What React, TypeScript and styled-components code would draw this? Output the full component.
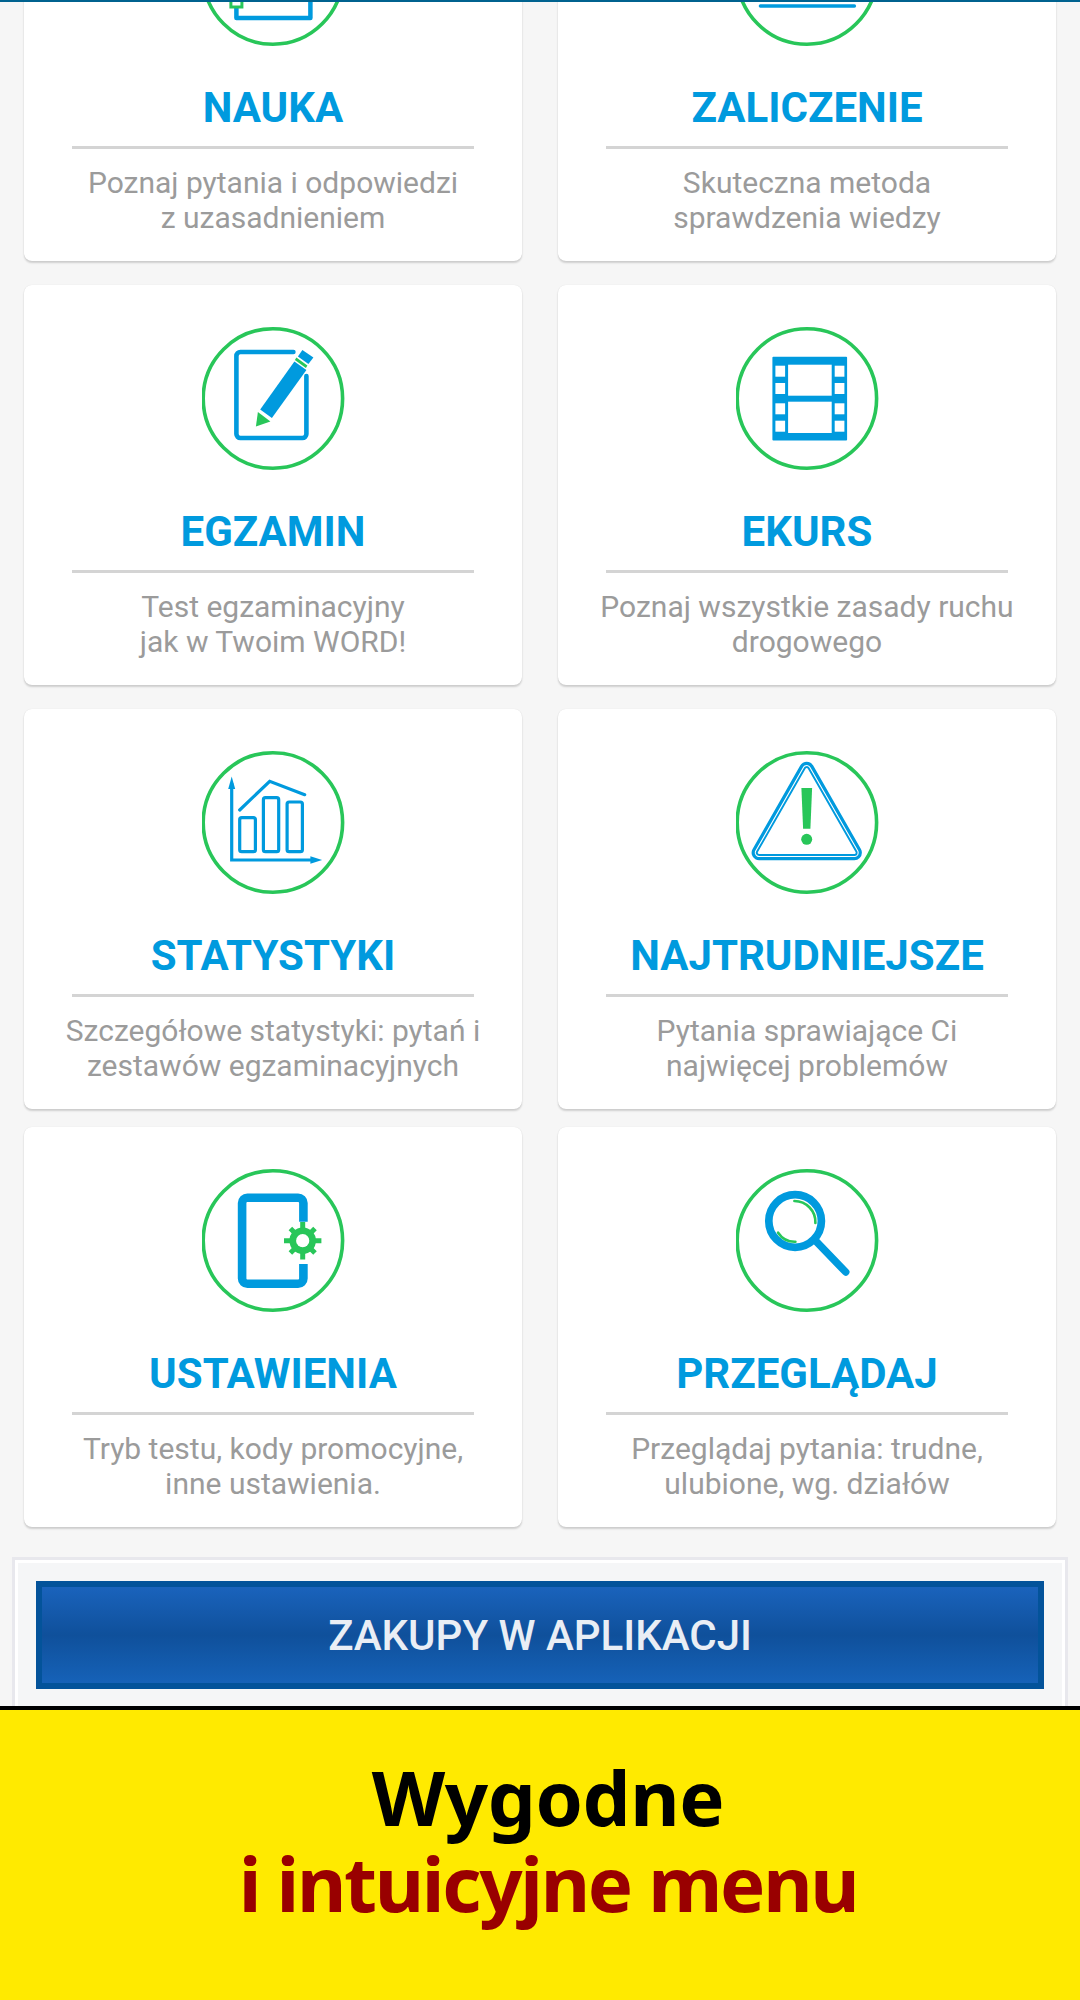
import React from 'react';
import styled, { createGlobalStyle } from 'styled-components';

const BLUE = '#009ade';
const GREEN = '#28c659';

const Global = createGlobalStyle`
  html, body { margin: 0; padding: 0; background: #f6f6f6; }
  * { box-sizing: border-box; }
`;

const Page = styled.div`
  width: 1080px;
  height: 2000px;
  display: flex;
  flex-direction: column;
  overflow: hidden;
  background: #f6f6f6;
  font-family: Roboto, "Liberation Sans", sans-serif;
`;
const TopLine = styled.div`
  flex: none;
  height: 2px;
  background: #00628f;
`;
const Viewport = styled.main`
  flex: 1;
  min-height: 0;
  overflow: hidden;
`;
const Scrolled = styled.div`
  margin-top: -141px;
`;
const Row = styled.section<{ $gap: number }>`
  display: grid;
  grid-template-columns: 498px 498px;
  column-gap: 36px;
  padding: 0 24px;
  margin-top: ${p => p.$gap}px;
`;
const Card = styled.article`
  height: 400px;
  padding-top: 42px;
  display: flex;
  flex-direction: column;
  align-items: center;
  background: #fff;
  border-radius: 8px;
  box-shadow: 0 0 1px rgba(0, 0, 0, 0.12), 0 2px 2px rgba(0, 0, 0, 0.16);
`;
const Icon = styled.svg`
  display: block;
  flex: none;
  width: 143px;
  height: 143px;
`;
const Title = styled.h2`
  margin: 38px 0 0;
  font-size: 42px;
  line-height: 48px;
  font-weight: 700;
  color: ${BLUE};
`;
const Rule = styled.hr`
  width: 402px;
  height: 3px;
  margin: 14px 0 0;
  border: 0;
  background: #d4d4d4;
`;
const Desc = styled.p`
  margin: 16px 0 0;
  width: 440px;
  text-align: center;
  font-size: 30px;
  line-height: 35px;
  color: #9b9b9b;
  white-space: pre-line;
`;
const Shop = styled.section`
  margin: 30px 12px 0;
  padding: 21px;
  border: 3px solid #e8e8ed;
  background: #f5f6f7;
  box-shadow: inset 0 0 0 3px #fff;
`;
const ShopButton = styled.button`
  display: block;
  width: 100%;
  height: 108px;
  padding: 0;
  border: 6px solid #03539a;
  background: linear-gradient(180deg, #1a63bc 0%, #0f509b 50%, #1662b8 100%);
  color: #e9eef5;
  font-family: Roboto, "Liberation Sans", sans-serif;
  font-size: 42px;
  font-weight: 500;
`;
const Banner = styled.footer`
  flex: none;
  height: 294px;
  padding: 44px 0 0 16px;
  border-top: 4px solid #000;
  background: #ffea00;
  text-align: center;
  font-family: "Noto Sans", "Open Sans", sans-serif;
  font-weight: 700;
  font-size: 76px;
  line-height: 86px;
`;
const BannerLine = styled.div<{ $color: string; $tight: number }>`
  color: ${p => p.$color};
  letter-spacing: ${p => p.$tight}px;
`;

const Ring = () => <circle cx="71.5" cy="71.5" r="69.7" fill="none" stroke={GREEN} strokeWidth="3.6" />;

const icons: Record<string, React.ReactNode> = {
  nauka: (
    <>
      <path d="M35 60V115H109V60" fill="none" stroke={BLUE} strokeWidth="4.5" strokeLinejoin="round" />
      <rect x="29.5" y="92" width="11" height="12" fill="#fff" stroke={GREEN} strokeWidth="3" />
    </>
  ),
  zaliczenie: <path d="M25 103H119" fill="none" stroke={BLUE} strokeWidth="3.4" strokeLinecap="round" />,
  egzamin: (
    <>
      <path d="M92 25H39a4 4 0 0 0-4 4V107a4 4 0 0 0 4 4H101a4 4 0 0 0 4-4V49" fill="none" stroke={BLUE} strokeWidth="4.6" strokeLinecap="round" />
      <path d="M101 23L112 30.5L107 37L96.5 29.5Z" fill={BLUE} />
      <path d="M95 30.5L106 38.5L104.5 41L93.5 33Z" fill={GREEN} />
      <path d="M93 34.5L105 43L70.5 91L58.8 82.5Z" fill={BLUE} />
      <path d="M56.5 85L69 94.5L54.5 99.5Z" fill={GREEN} />
    </>
  ),
  ekurs: (
    <>
      <rect x="37" y="29.7" width="74.7" height="83.7" rx="1" fill={BLUE} />
      {[38.7, 56, 76.3, 93.7].map(y => (
        <React.Fragment key={y}>
          <rect x="40" y={y} width="9.7" height="11" fill="#fff" />
          <rect x="99.3" y={y} width="9.7" height="11" fill="#fff" />
        </React.Fragment>
      ))}
      <rect x="52.7" y="37.7" width="43.6" height="31" fill="#fff" />
      <rect x="52.7" y="74.7" width="43.6" height="31.3" fill="#fff" />
    </>
  ),
  statystyki: (
    <>
      <path d="M30.3 32V109H113" fill="none" stroke={BLUE} strokeWidth="3.2" />
      <path d="M30.3 25.5L33.8 38H26.8Z" fill={BLUE} />
      <path d="M120.7 109L109 105.2V112.8Z" fill={BLUE} />
      <rect x="38.3" y="66.7" width="15.7" height="34" rx="2" fill="none" stroke={BLUE} strokeWidth="3.2" />
      <rect x="62" y="46.7" width="15.3" height="54" rx="2" fill="none" stroke={BLUE} strokeWidth="3.2" />
      <rect x="85.7" y="51" width="15.3" height="49.7" rx="2" fill="none" stroke={BLUE} strokeWidth="3.2" />
      <path d="M38.3 59L68.3 30.3L103.3 43.7" fill="none" stroke={BLUE} strokeWidth="3.2" strokeLinecap="round" />
    </>
  ),
  najtrudniejsze: (
    <>
      {[
        [15, BLUE],
        [8.6, '#fff'],
        [6.4, BLUE],
        [2.6, '#fff'],
      ].map(([w, c]) => (
        <path key={String(w)} d="M71.3 18.3L23.7 101.7H119Z" fill="#fff" stroke={String(c)} strokeWidth={Number(w)} strokeLinejoin="round" />
      ))}
      <path d="M66 37H76.7L75 77.7H67.7Z" fill={GREEN} />
      <circle cx="71.3" cy="88.3" r="5.5" fill={GREEN} />
    </>
  ),
  ustawienia: (
    <>
      <path d="M102 52.7V34a5.3 5.3 0 0 0-5.3-5.3H46a5.3 5.3 0 0 0-5.3 5.3V109.4a5.3 5.3 0 0 0 5.3 5.3H96.7a5.3 5.3 0 0 0 5.3-5.3V95" fill="none" stroke={BLUE} strokeWidth="8.6" />
      <circle cx="101.3" cy="71.7" r="10" fill="none" stroke={GREEN} strokeWidth="6.5" />
      <path d="M101.3 53V90.4M82.6 71.7H120M89 59.4L113.6 84M113.6 59.4L89 84" fill="none" stroke={GREEN} strokeWidth="5" />
      <circle cx="101.3" cy="71.7" r="6.6" fill="#fff" />
    </>
  ),
  przegladaj: (
    <>
      <circle cx="59.7" cy="52" r="26.3" fill="none" stroke={BLUE} strokeWidth="7.7" />
      <path d="M81 72.7L110.3 103" fill="none" stroke={BLUE} strokeWidth="7.5" strokeLinecap="round" />
      <path d="M59 32A21 21 0 0 1 80 54" fill="none" stroke={GREEN} strokeWidth="2.6" strokeLinecap="round" />
      <path d="M42.7 63.7A20 20 0 0 0 60 72.7" fill="none" stroke={GREEN} strokeWidth="2.6" strokeLinecap="round" />
    </>
  ),
};

const rows = [
  {
    gap: 0,
    cards: [
      { icon: 'nauka', title: 'NAUKA', desc: 'Poznaj pytania i odpowiedzi\nz uzasadnieniem' },
      { icon: 'zaliczenie', title: 'ZALICZENIE', desc: 'Skuteczna metoda\nsprawdzenia wiedzy' },
    ],
  },
  {
    gap: 24,
    cards: [
      { icon: 'egzamin', title: 'EGZAMIN', desc: 'Test egzaminacyjny\njak w Twoim WORD!' },
      { icon: 'ekurs', title: 'EKURS', desc: 'Poznaj wszystkie zasady ruchu\ndrogowego' },
    ],
  },
  {
    gap: 24,
    cards: [
      { icon: 'statystyki', title: 'STATYSTYKI', desc: 'Szczegółowe statystyki: pytań i\nzestawów egzaminacyjnych' },
      { icon: 'najtrudniejsze', title: 'NAJTRUDNIEJSZE', desc: 'Pytania sprawiające Ci\nnajwięcej problemów' },
    ],
  },
  {
    gap: 18,
    cards: [
      { icon: 'ustawienia', title: 'USTAWIENIA', desc: 'Tryb testu, kody promocyjne,\ninne ustawienia.' },
      { icon: 'przegladaj', title: 'PRZEGLĄDAJ', desc: 'Przeglądaj pytania: trudne,\nulubione, wg. działów' },
    ],
  },
];

export default function App() {
  return (
    <Page>
      <Global />
      <TopLine />
      <Viewport>
        <Scrolled>
          {rows.map(r => (
            <Row key={r.cards[0].title} $gap={r.gap}>
              {r.cards.map(c => (
                <Card key={c.title}>
                  <Icon viewBox="0.6 0 143 143">
                    <Ring />
                    {icons[c.icon]}
                  </Icon>
                  <Title>{c.title}</Title>
                  <Rule />
                  <Desc>{c.desc}</Desc>
                </Card>
              ))}
            </Row>
          ))}
          <Shop>
            <ShopButton>ZAKUPY W APLIKACJI</ShopButton>
          </Shop>
        </Scrolled>
      </Viewport>
      <Banner>
        <BannerLine $color="#000" $tight={-0.4}>Wygodne</BannerLine>
        <BannerLine $color="#990000" $tight={-2.3}>i intuicyjne menu</BannerLine>
      </Banner>
    </Page>
  );
}
